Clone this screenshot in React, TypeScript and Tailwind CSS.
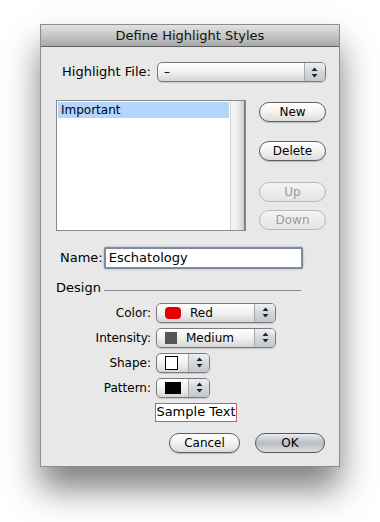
import React from "react";

const font = { fontFamily: '"DejaVu Sans", "Liberation Sans", sans-serif' };

function Arrows() {
    return (
        <svg width="7" height="11" viewBox="0 0 7 11">
            <path d="M3.5 0.5 L6.5 4 L0.5 4 Z" fill="#222" />
            <path d="M3.5 10.5 L6.5 7 L0.5 7 Z" fill="#222" />
        </svg>
    );
}

type Kind = "red" | "gray" | "white" | "black";

function Swatch({ kind }: { kind: Kind }) {
    if (kind === "red") return <span className="w-[16px] h-[12px] rounded-[4px] bg-[#e40000]" />;
    if (kind === "gray") return <span className="w-[12px] h-[12px] bg-[#555555]" />;
    if (kind === "white") return <span className="w-[13px] h-[14px] bg-white border border-black" />;
    return <span className="w-[16px] h-[12px] bg-black" />;
}

function Popup({ w, kind, text }: { w: string; kind?: Kind; text?: string }) {
    return (
        <div
            className={`${w} h-[20px] flex rounded-[5px] border border-[#7b7b7b] overflow-hidden bg-gradient-to-b from-[#ffffff] via-[#f1f1f1] to-[#d6d6d6] shadow-[0_1px_1px_rgba(0,0,0,0.15)]`}
        >
            <div
                className={`flex-1 flex items-center text-[12px] text-black ${
                    kind ? "gap-[9px] pl-[8px]" : "pl-[6px]"
                }`}
            >
                {kind && <Swatch kind={kind} />}
                {text && <span>{text}</span>}
            </div>
            <div className="w-[21px] flex items-center justify-center border-l border-[#a8a8a8] bg-gradient-to-b from-[#eef0f3] via-[#d3d7dd] to-[#c3c8cf]">
                <Arrows />
            </div>
        </div>
    );
}

function AquaButton({
    title,
    disabled,
    primary,
    width,
}: {
    title: string;
    disabled?: boolean;
    primary?: boolean;
    width: string;
}) {
    const base = "h-[20px] rounded-full flex items-center justify-center text-[12px] border";
    const look = primary
        ? "border-[#55575c] bg-gradient-to-b from-[#e9ebee] via-[#b9bdc4] to-[#d9dce0] text-black"
        : disabled
        ? "border-[#b9b9b9] bg-gradient-to-b from-[#f4f4f4] to-[#e4e4e4] text-[#9a9a9a]"
        : "border-[#5f5f5f] bg-gradient-to-b from-[#ffffff] via-[#f2f2f2] to-[#dcdcdc] text-black shadow-[0_1px_1px_rgba(0,0,0,0.2)]";
    return <div className={`${base} ${look} ${width}`}>{title}</div>;
}

export default function App() {
    const rows: { label: string; el: React.ReactNode }[] = [
        { label: "Color:", el: <Popup w="w-[120px]" kind="red" text="Red" /> },
        { label: "Intensity:", el: <Popup w="w-[120px]" kind="gray" text="Medium" /> },
        { label: "Shape:", el: <Popup w="w-[54px]" kind="white" /> },
        { label: "Pattern:", el: <Popup w="w-[54px]" kind="black" /> },
    ];

    return (
        <div className="w-[380px] h-[522px] bg-white pt-[24px] pl-[40px]" style={font}>
            <div className="w-[300px] h-[443px] bg-[#e8e8e8] border border-[#8c8c8c] shadow-[0_22px_32px_rgba(0,0,0,0.5)] flex flex-col">
                <div className="h-[22px] flex items-center justify-center text-[13px] text-[#111] bg-gradient-to-b from-[#e3e3e3] to-[#a9a9a9] border-b border-[#5e5e5e]">
                    Define Highlight Styles
                </div>

                <div className="flex items-center mt-[15px] pl-[21px] gap-[6px]">
                    <span className="text-[13px] text-black">Highlight File:</span>
                    <Popup w="w-[169px]" text="–" />
                </div>

                <div className="flex mt-[18px] pl-[15px]">
                    <div className="w-[190px] h-[131px] flex border border-[#8a8a8a] bg-white">
                        <div className="flex-1 pt-[1px] px-[1px]">
                            <div className="h-[16px] bg-[#b5d5ff] text-[12px] leading-[16px] pl-[3px] text-black">
                                Important
                            </div>
                        </div>
                        <div className="w-[15px] border-l border-[#d0d0d0] border-r border-r-[#777] bg-gradient-to-r from-[#f8f8f8] via-[#ececec] to-[#cdcdcd]" />
                    </div>
                    <div className="flex flex-col ml-[13px] pt-[2px]">
                        <AquaButton title="New" width="w-[67px]" />
                        <div className="mt-[19px]">
                            <AquaButton title="Delete" width="w-[67px]" />
                        </div>
                        <div className="mt-[21px]">
                            <AquaButton title="Up" width="w-[67px]" disabled />
                        </div>
                        <div className="mt-[8px]">
                            <AquaButton title="Down" width="w-[67px]" disabled />
                        </div>
                    </div>
                </div>

                <div className="flex items-center mt-[16px] pl-[19px] gap-[1px]">
                    <span className="text-[13px] text-black">Name:</span>
                    <div className="w-[199px] h-[22px] flex items-center bg-white border-[2px] border-[#7d8b9c] rounded-[2px] shadow-[0_0_2px_rgba(80,100,130,0.6)] pl-[3px] text-[13px] text-black">
                        Eschatology
                    </div>
                </div>

                <div className="flex items-center mt-[9px] pl-[15px] gap-[3px]">
                    <span className="text-[13px] text-black">Design</span>
                    <div className="w-[197px] h-px bg-[#8a8a8a] mt-[6px]" />
                </div>

                <div className="flex flex-col gap-[5px] mt-[5px]">
                    {rows.map((r) => (
                        <div key={r.label} className="flex items-center">
                            <span className="w-[110px] text-right text-[12px] text-black">{r.label}</span>
                            <div className="ml-[5px]">{r.el}</div>
                        </div>
                    ))}
                </div>

                <div className="flex mt-[5px] pl-[114px]">
                    <div className="w-[82px] h-[19px] flex items-center justify-center bg-white border border-[#d55a5a] text-[13px] text-black">
                        Sample Text
                    </div>
                </div>

                <div className="flex mt-[11px] pl-[128px] gap-[15px]">
                    <AquaButton title="Cancel" width="w-[71px]" />
                    <AquaButton title="OK" width="w-[70px]" primary />
                </div>
            </div>
        </div>
    );
}
